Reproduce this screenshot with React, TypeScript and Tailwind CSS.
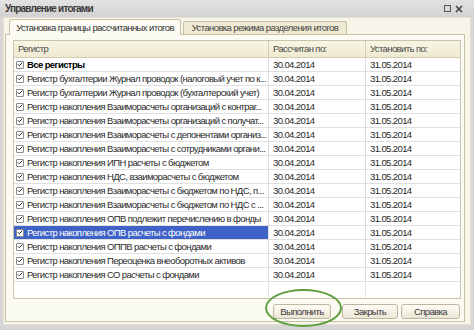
import { Check } from "lucide-react"

const rows = [
  { name: "Все регистры", bold: true },
  { name: "Регистр бухгалтерии Журнал проводок (налоговый учет по к..." },
  { name: "Регистр бухгалтерии Журнал проводок (бухгалтерский учет)" },
  { name: "Регистр накопления Взаиморасчеты организаций с контраг..." },
  { name: "Регистр накопления Взаиморасчеты организаций с получат..." },
  { name: "Регистр накопления Взаиморасчеты с депонентами организ..." },
  { name: "Регистр накопления Взаиморасчеты с сотрудниками органи..." },
  { name: "Регистр накопления ИПН расчеты с бюджетом" },
  { name: "Регистр накопления НДС, взаиморасчеты с бюджетом" },
  { name: "Регистр накопления Взаиморасчеты с бюджетом по НДС, п..." },
  { name: "Регистр накопления Взаиморасчеты с бюджетом по НДС с ..." },
  { name: "Регистр накопления ОПВ подлежит перечислению в фонды" },
  { name: "Регистр накопления ОПВ расчеты с фондами", selected: true },
  { name: "Регистр накопления ОППВ расчеты с фондами" },
  { name: "Регистр накопления Переоценка внеоборотных активов" },
  { name: "Регистр накопления СО расчеты с фондами" },
]

function Box() {
  return (
    <span className="w-[8px] h-[8px] shrink-0 border border-[#8a8a8a] bg-white flex items-center justify-center rounded-[1px]">
      <Check className="w-[7px] h-[7px] text-[#1e2a44]" strokeWidth={4} />
    </span>
  )
}

function Btn({ label, w }: { label: string; w: string }) {
  return (
    <button className={`h-[15px] ${w} rounded-[3px] border border-[#bdb7a0] bg-gradient-to-b from-[#fdfcf6] to-[#ebe6d3] text-[#3a3a3a] leading-none`}>
      {label}
    </button>
  )
}

export default function App() {
  return (
    <div className="relative w-[474px] h-[330px] bg-[#d6d6d6] flex flex-col overflow-hidden text-[9.5px] tracking-[-0.6px]" style={{ fontFamily: '"Liberation Sans", Arial, sans-serif' }}>
      <div className="h-[17px] shrink-0 flex items-center justify-between pl-[5px] pr-[11px] bg-gradient-to-b from-[#e2e2e2] to-[#d2d2d2]">
        <span className="text-[10px] font-bold tracking-[-0.8px] text-[#3a3a3a] leading-none">Управление итогами</span>
        <div className="flex items-center gap-[4px] text-[#444]">
          <span className="w-[7px] h-[7px] border border-[#555]" />
          <svg width="8" height="8" viewBox="0 0 8 8"><path d="M1 1L7 7M7 1L1 7" stroke="#444" strokeWidth="1.6" /></svg>
        </div>
      </div>

      <div className="flex-1 mx-[3px] mb-[5px] bg-[#f7f5ea] border border-[#e6e2cf] flex flex-col">
        <div className="h-[16px] shrink-0 flex items-end pl-[5px] gap-[2px] leading-none">
          <div className="h-[16px] w-[172px] flex items-center justify-center border border-b-0 border-[#c7c1a6] rounded-t-[3px] bg-[#fbfaf3] text-[#333] relative top-[1px]">
            Установка границы рассчитанных итогов
          </div>
          <div className="h-[13px] w-[164px] flex items-center justify-center border border-b-0 border-[#c7c1a6] rounded-t-[3px] bg-[#efe9d2] text-[#444]">
            Установка режима разделения итогов
          </div>
        </div>

        <div className="flex-1 ml-[1px] mr-[5px] mb-[2px] border border-[#c7c1a6] bg-[#fbfaf3] pt-[5px] pl-[7px] pr-[3px] flex flex-col">
          <div className="h-[259px] border border-[#c9c3aa] bg-white flex flex-col leading-none">
            <div className="h-[17px] shrink-0 flex bg-gradient-to-b from-[#f8f5e6] to-[#efe9d0] border-b border-[#d2ccb3] text-[#4a4a4a]">
              <div className="w-[255px] flex items-center pl-[4px] border-r border-[#d2ccb3]">Регистр</div>
              <div className="w-[97px] flex items-center pl-[4px] border-r border-[#d2ccb3]">Рассчитан по:</div>
              <div className="flex-1 flex items-center pl-[4px]">Установить по:</div>
            </div>
            {rows.map((r, i) => (
              <div key={i} className="h-[14px] shrink-0 flex border-b border-[#e0e0e0] text-[#2a2a2a]">
                <div className={`w-[255px] flex items-center gap-[3px] pl-[2px] border-r border-[#dcdcdc] overflow-hidden whitespace-nowrap ${r.selected ? "bg-[#3e62c6] text-white" : ""} ${r.bold ? "font-bold text-black" : ""}`}>
                  <Box />
                  <span>{r.name}</span>
                </div>
                <div className="w-[97px] flex items-center pl-[4px] border-r border-[#dcdcdc]">30.04.2014</div>
                <div className="flex-1 flex items-center pl-[4px]">31.05.2014</div>
              </div>
            ))}
            <div className="flex-1 flex">
              <div className="w-[255px] border-r border-[#e4e4e4]" />
              <div className="w-[97px] border-r border-[#e4e4e4]" />
            </div>
          </div>
          <div className="flex justify-end gap-[3px] mt-[5px] pr-[1px]">
            <Btn label="Выполнить" w="w-[58px]" />
            <div className="w-[5px]" />
            <Btn label="Закрыть" w="w-[56px]" />
            <Btn label="Справка" w="w-[59px]" />
          </div>
        </div>
      </div>

      <div className="absolute left-[265px] top-[289px] w-[77px] h-[38px] rounded-[50%] border-[2.5px] border-[#5f9f3f] pointer-events-none" />
    </div>
  )
}
